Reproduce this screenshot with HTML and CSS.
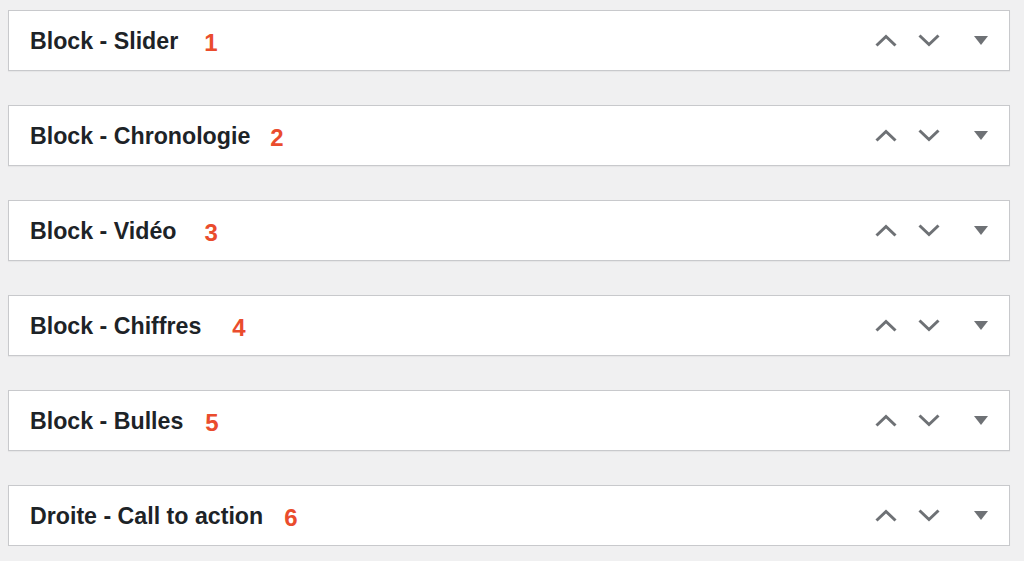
FILE: index.html
```html
<!DOCTYPE html>
<html lang="fr">
<head>
    <meta charset="UTF-8">
    <meta name="viewport" content="width=device-width, initial-scale=1.0">
    <title>Blocs</title>
    <link rel="stylesheet" href="styles.css">
</head>
<body>
    <div class="boxes">
        <div class="postbox">
            <h2 class="postbox-title">Block - Slider <span class="num gap-1">1</span></h2>
            <div class="postbox-actions">
                <button class="move-btn" type="button"><svg width="22" height="13" viewBox="0 0 22 13"><polyline points="1.5,11.5 11,2.5 20.5,11.5" /></svg></button>
                <button class="move-btn" type="button"><svg width="22" height="13" viewBox="0 0 22 13"><polyline points="1.5,1.5 11,10.5 20.5,1.5" /></svg></button>
                <button class="toggle-btn" type="button"><svg width="14" height="9" viewBox="0 0 14 9"><polygon points="0,0 14,0 7,9" /></svg></button>
            </div>
        </div>
        <div class="postbox">
            <h2 class="postbox-title">Block - Chronologie <span class="num gap-2">2</span></h2>
            <div class="postbox-actions">
                <button class="move-btn" type="button"><svg width="22" height="13" viewBox="0 0 22 13"><polyline points="1.5,11.5 11,2.5 20.5,11.5" /></svg></button>
                <button class="move-btn" type="button"><svg width="22" height="13" viewBox="0 0 22 13"><polyline points="1.5,1.5 11,10.5 20.5,1.5" /></svg></button>
                <button class="toggle-btn" type="button"><svg width="14" height="9" viewBox="0 0 14 9"><polygon points="0,0 14,0 7,9" /></svg></button>
            </div>
        </div>
        <div class="postbox">
            <h2 class="postbox-title">Block - Vidéo <span class="num gap-3">3</span></h2>
            <div class="postbox-actions">
                <button class="move-btn" type="button"><svg width="22" height="13" viewBox="0 0 22 13"><polyline points="1.5,11.5 11,2.5 20.5,11.5" /></svg></button>
                <button class="move-btn" type="button"><svg width="22" height="13" viewBox="0 0 22 13"><polyline points="1.5,1.5 11,10.5 20.5,1.5" /></svg></button>
                <button class="toggle-btn" type="button"><svg width="14" height="9" viewBox="0 0 14 9"><polygon points="0,0 14,0 7,9" /></svg></button>
            </div>
        </div>
        <div class="postbox">
            <h2 class="postbox-title">Block - Chiffres <span class="num gap-4">4</span></h2>
            <div class="postbox-actions">
                <button class="move-btn" type="button"><svg width="22" height="13" viewBox="0 0 22 13"><polyline points="1.5,11.5 11,2.5 20.5,11.5" /></svg></button>
                <button class="move-btn" type="button"><svg width="22" height="13" viewBox="0 0 22 13"><polyline points="1.5,1.5 11,10.5 20.5,1.5" /></svg></button>
                <button class="toggle-btn" type="button"><svg width="14" height="9" viewBox="0 0 14 9"><polygon points="0,0 14,0 7,9" /></svg></button>
            </div>
        </div>
        <div class="postbox">
            <h2 class="postbox-title">Block - Bulles <span class="num gap-5">5</span></h2>
            <div class="postbox-actions">
                <button class="move-btn" type="button"><svg width="22" height="13" viewBox="0 0 22 13"><polyline points="1.5,11.5 11,2.5 20.5,11.5" /></svg></button>
                <button class="move-btn" type="button"><svg width="22" height="13" viewBox="0 0 22 13"><polyline points="1.5,1.5 11,10.5 20.5,1.5" /></svg></button>
                <button class="toggle-btn" type="button"><svg width="14" height="9" viewBox="0 0 14 9"><polygon points="0,0 14,0 7,9" /></svg></button>
            </div>
        </div>
        <div class="postbox">
            <h2 class="postbox-title">Droite - Call to action <span class="num gap-6">6</span></h2>
            <div class="postbox-actions">
                <button class="move-btn" type="button"><svg width="22" height="13" viewBox="0 0 22 13"><polyline points="1.5,11.5 11,2.5 20.5,11.5" /></svg></button>
                <button class="move-btn" type="button"><svg width="22" height="13" viewBox="0 0 22 13"><polyline points="1.5,1.5 11,10.5 20.5,1.5" /></svg></button>
                <button class="toggle-btn" type="button"><svg width="14" height="9" viewBox="0 0 14 9"><polygon points="0,0 14,0 7,9" /></svg></button>
            </div>
        </div>
    </div>
</body>
</html>
```
FILE: styles.css
```css
body {
    font-family: "Liberation Sans", Arial, sans-serif;
    background-color: #f0f0f1;
    margin: 0;
    padding: 10px 14px 0 8px;
}
.boxes {
    display: flex;
    flex-direction: column;
    gap: 34px;
}
.postbox {
    display: flex;
    align-items: center;
    justify-content: space-between;
    height: 59px;
    background: #fff;
    border: 1px solid #c8c9cc;
    box-shadow: 0 1px 1px rgba(0, 0, 0, 0.04);
}
.postbox-title {
    margin: 0;
    padding-left: 21px;
    font-size: 23.2px;
    font-weight: bold;
    color: #1d2327;
    display: flex;
    align-items: baseline;
}
.num {
    color: #ea4c2d;
    font-size: 24px;
    position: relative;
    top: 2px;
}
.gap-1 { margin-left: 26px; }
.gap-2 { margin-left: 20px; }
.gap-3 { margin-left: 28px; }
.gap-4 { margin-left: 31px; }
.gap-5 { margin-left: 22px; }
.gap-6 { margin-left: 21px; }
.postbox-actions {
    display: flex;
    align-items: center;
    padding-right: 21px;
}
.move-btn, .toggle-btn {
    border: none;
    background: none;
    padding: 0;
    cursor: pointer;
    display: flex;
}
.move-btn {
    margin-right: 21px;
}
.move-btn svg polyline {
    fill: none;
    stroke: #6e7175;
    stroke-width: 3;
}
.toggle-btn {
    margin-left: 13px;
}
.toggle-btn svg polygon {
    fill: #6e7175;
}
```
